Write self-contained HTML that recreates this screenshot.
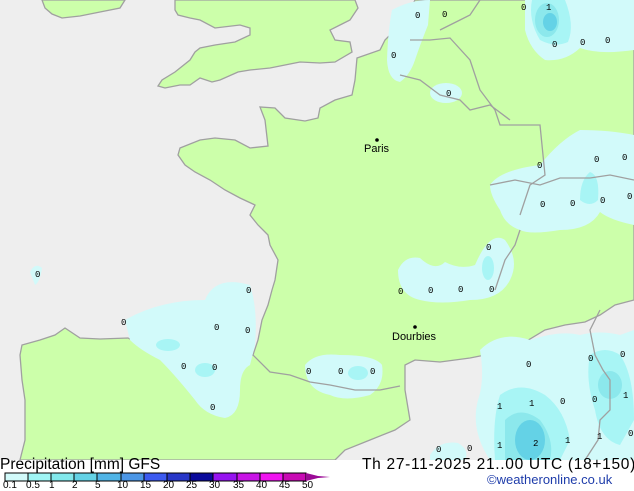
<!DOCTYPE html>
<html><head><meta charset="utf-8"><style>
html,body{margin:0;padding:0;background:#fff;}
body{width:634px;height:490px;overflow:hidden;position:relative;font-family:"Liberation Sans",sans-serif;}
svg{position:absolute;left:0;top:0}
.t{position:absolute;font-size:15.5px;color:#000;white-space:nowrap;line-height:1}
.l{position:absolute;font-size:10px;color:#000;top:481px;line-height:1}
</style></head><body>
<svg width="634" height="460" viewBox="0 0 634 460">
<rect width="634" height="460" fill="#eeeeee"/>
<g fill="#ccffaa" stroke="#a0a0a0" stroke-width="1.3">
<polygon points="42,0 125,0 120,8 100,12 80,16 62,18 52,14 45,8"/>
<polygon points="175,0 355,0 358,8 350,20 340,25 330,30 335,40 350,42 352,52 335,62 320,63 300,62 285,65 270,68 250,70 238,72 220,80 212,82 200,78 190,85 180,85 165,88 158,86 162,80 175,72 190,60 195,52 200,48 215,45 235,42 250,35 250,28 240,25 215,28 200,20 190,18 178,15 175,10"/>
<polygon points="357,58 380,50 385,40 395,30 400,20 410,10 415,0 634,0 634,300 615,305 600,315 585,322 565,325 545,330 520,345 500,352 470,358 440,362 415,360 405,365 405,390 410,420 395,430 370,440 345,450 335,460 20,460 25,440 25,400 22,380 20,355 22,345 40,340 55,335 65,328 80,338 100,339 128,338 140,345 160,350 190,352 210,355 240,356 253,355 258,340 262,320 268,305 272,290 275,280 278,260 270,245 268,235 258,225 250,215 255,205 240,198 225,190 210,180 195,172 185,165 178,155 180,148 200,140 215,138 235,140 250,148 268,146 265,120 260,107 275,108 285,118 305,121 318,118 320,108 335,100 352,95 355,80"/>
</g>
<g fill="#d2fafa">
<path d="M392,10 Q410,0 430,0 L428,25 Q420,45 415,60 Q410,75 400,82 Q388,80 387,60 Q388,30 392,10Z"/>
<ellipse cx="446" cy="93" rx="16" ry="10"/>
<path d="M525,0 L634,0 L634,50 Q600,55 580,48 Q565,62 545,60 Q530,50 525,30Z"/>
<path d="M490,185 Q500,170 540,165 Q560,140 580,130 Q610,130 634,135 L634,225 Q610,220 600,212 Q590,230 560,230 Q530,235 520,230 Q505,225 500,210 Q490,195 490,185Z"/>
<path d="M398,270 Q405,255 420,258 Q435,272 445,262 Q460,270 475,265 Q490,230 505,240 Q520,260 510,280 Q500,300 470,300 Q440,305 420,300 Q398,295 398,270Z"/>
<path d="M30,272 Q35,262 42,268 Q40,282 35,285Z"/>
<path d="M125,320 Q160,300 205,300 Q215,275 250,285 Q258,310 255,345 L250,365 Q240,370 240,390 Q240,415 225,418 Q205,415 195,400 Q175,375 160,360 Q140,350 130,340Z"/>
<path d="M305,365 Q315,352 340,355 Q375,355 382,365 Q385,385 370,395 Q345,402 330,395 Q305,390 305,365Z"/>
<path d="M480,350 Q500,330 530,340 Q560,330 580,335 Q600,330 620,335 L634,330 L634,460 L490,460 Q470,430 478,400 Q485,380 480,350Z"/>
<path d="M430,455 Q440,440 458,443 Q470,450 465,460 L430,460Z"/>
</g>
<g fill="#a8f5f5">
<path d="M532,0 L565,0 Q575,25 568,42 Q555,48 540,40 Q528,20 532,0Z"/>
<ellipse cx="168" cy="345" rx="12" ry="6"/>
<ellipse cx="205" cy="370" rx="10" ry="7"/>
<ellipse cx="358" cy="373" rx="10" ry="7"/>
<ellipse cx="488" cy="268" rx="6" ry="12"/>
<path d="M590,172 Q600,175 598,200 Q590,208 580,200 Q580,180 590,172Z"/>
<path d="M500,395 Q520,380 545,395 Q565,410 570,440 L560,460 L495,460 Q492,420 500,395Z"/>
<path d="M590,355 Q605,345 620,355 Q634,375 634,420 L620,445 Q600,440 595,410 Q585,380 590,355Z"/>
</g>
<g fill="#8ce8ec">
<ellipse cx="547" cy="20" rx="12" ry="17"/>
<path d="M505,420 Q520,405 540,420 Q555,440 550,460 L505,460Z"/>
<ellipse cx="610" cy="385" rx="12" ry="14"/>
</g>
<g fill="#64d2e6">
<ellipse cx="550" cy="22" rx="7" ry="9"/>
<ellipse cx="530" cy="440" rx="15" ry="20"/>
</g>
<g fill="none" stroke="#a0a0a0" stroke-width="1.3">
<polyline points="600,310 590,330 595,355 603,370 610,380 610,410 600,420 598,440 585,460"/>
<polyline points="440,30 460,20 470,15 480,0"/>
<polyline points="410,40 430,40 450,38 470,60 480,90 495,110 500,125 540,125 545,175 530,185 525,200 520,215"/>
<polyline points="400,75 420,80 440,95 460,100 470,110 490,105 510,120"/>
<polyline points="490,185 515,180 540,185 560,178 590,178 610,175 634,180"/>
<polyline points="520,230 515,245 505,260 495,290"/>
<polyline points="253,355 270,372 290,375 310,382 330,385 355,390 380,390 400,386"/>
</g>
<g font-family="Liberation Mono,monospace" font-size="9" fill="#000">
<text x="415" y="18">0</text><text x="442" y="17">0</text><text x="391" y="58">0</text><text x="446" y="96">0</text>
<text x="521" y="10">0</text><text x="546" y="10">1</text><text x="552" y="47">0</text><text x="580" y="45">0</text><text x="605" y="43">0</text>
<text x="537" y="168">0</text><text x="594" y="162">0</text><text x="622" y="160">0</text><text x="540" y="207">0</text><text x="570" y="206">0</text><text x="600" y="203">0</text><text x="627" y="199">0</text>
<text x="486" y="250">0</text><text x="398" y="294">0</text><text x="428" y="293">0</text><text x="458" y="292">0</text><text x="489" y="292">0</text>
<text x="35" y="277">0</text><text x="246" y="293">0</text><text x="121" y="325">0</text><text x="214" y="330">0</text><text x="245" y="333">0</text>
<text x="181" y="369">0</text><text x="212" y="370">0</text><text x="210" y="410">0</text><text x="306" y="374">0</text><text x="338" y="374">0</text><text x="370" y="374">0</text>
<text x="526" y="367">0</text><text x="588" y="361">0</text><text x="620" y="357">0</text><text x="560" y="404">0</text><text x="592" y="402">0</text><text x="623" y="398">1</text>
<text x="497" y="409">1</text><text x="529" y="406">1</text><text x="497" y="448">1</text><text x="533" y="446">2</text><text x="565" y="443">1</text><text x="597" y="439">1</text><text x="628" y="436">0</text>
<text x="436" y="452">0</text><text x="467" y="451">0</text>
</g>
<circle cx="377" cy="140" r="1.8" fill="#000"/>
<text x="364" y="152" font-size="11" font-family="Liberation Sans,sans-serif">Paris</text>
<circle cx="415" cy="327" r="1.8" fill="#000"/>
<text x="392" y="340" font-size="11" font-family="Liberation Sans,sans-serif">Dourbies</text>
</svg>
<div class="t" style="left:0;top:457px">Precipitation [mm] GFS</div>
<div class="t" style="left:362px;top:457px;letter-spacing:0.7px">Th 27-11-2025 21..00 UTC (18+150)</div>
<div class="t" style="left:487px;top:473px;font-size:13px;color:#1e3caa">©weatheronline.co.uk</div>
<svg width="634" height="490" viewBox="0 0 634 490" style="pointer-events:none">
<g stroke="#000" stroke-width="1">
<rect x="5" y="473" width="23" height="8" fill="#d2fafa"/>
<rect x="28" y="473" width="23" height="8" fill="#a0f5f5"/>
<rect x="51" y="473" width="23" height="8" fill="#82e8ec"/>
<rect x="74" y="473" width="23" height="8" fill="#64d2e6"/>
<rect x="97" y="473" width="24" height="8" fill="#50b4e6"/>
<rect x="121" y="473" width="23" height="8" fill="#4b96e6"/>
<rect x="144" y="473" width="23" height="8" fill="#3c5af0"/>
<rect x="167" y="473" width="23" height="8" fill="#2837c8"/>
<rect x="190" y="473" width="23" height="8" fill="#0a0a9b"/>
<rect x="213" y="473" width="24" height="8" fill="#9614f0"/>
<rect x="237" y="473" width="23" height="8" fill="#c814e6"/>
<rect x="260" y="473" width="23" height="8" fill="#f014f0"/>
<rect x="283" y="473" width="23" height="8" fill="#c80ab4"/>
</g>
<polygon points="306,473 318,476 330,477 318,478 306,481" fill="#9b0a96"/>
</svg>
<div class="l" style="left:3px">0.1</div><div class="l" style="left:26px">0.5</div><div class="l" style="left:49px">1</div>
<div class="l" style="left:72px">2</div><div class="l" style="left:95px">5</div><div class="l" style="left:117px">10</div>
<div class="l" style="left:140px">15</div><div class="l" style="left:163px">20</div><div class="l" style="left:186px">25</div>
<div class="l" style="left:209px">30</div><div class="l" style="left:233px">35</div><div class="l" style="left:256px">40</div>
<div class="l" style="left:279px">45</div><div class="l" style="left:302px">50</div>
</body></html>
